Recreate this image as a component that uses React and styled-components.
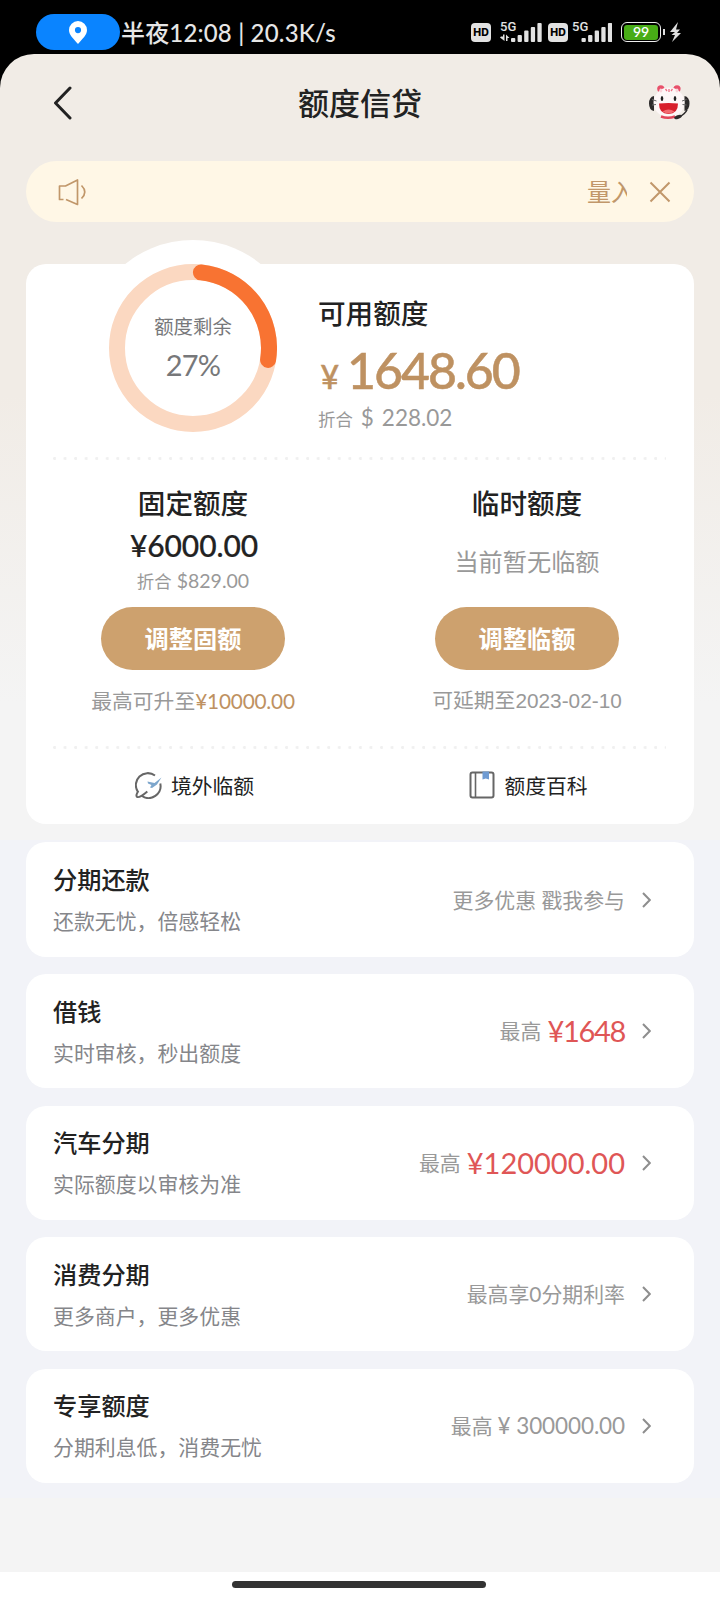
import styled, { createGlobalStyle } from 'styled-components';

const GlobalStyle = createGlobalStyle`
  * {
    box-sizing: border-box;
  }
  body {
    margin: 0;
    background: #000;
    font-family: Lato, 'Noto Sans CJK SC', sans-serif;
    color: #222;
  }
`;

const Screen = styled.div`
  width: 720px;
  height: 1600px;
  display: flex;
  flex-direction: column;
  overflow: hidden;
  background: #000;
`;

/* status bar */

const StatusBar = styled.div`
  height: 54px;
  flex: none;
  display: flex;
  align-items: center;
  padding: 10px 39px 0 36px;
  color: #e6e6e6;
`;

const LocationPill = styled.div`
  width: 84px;
  height: 36px;
  border-radius: 18px;
  background: #0a84ff;
  display: flex;
  align-items: center;
  justify-content: center;
`;

const StatusText = styled.div`
  margin-left: 1px;
  padding-top: 2px;
  font-size: 24px;
  line-height: 36px;
  font-weight: 500;
  letter-spacing: 0.17px;
  white-space: pre;
`;

const StatusIcons = styled.div`
  margin-left: auto;
  display: flex;
  align-items: center;
`;

const HdBadge = styled.div`
  width: 20px;
  height: 19px;
  margin-right: ${(props) => props.$gap}px;
  border-radius: 4px;
  background: #e2e2e2;
  color: #000;
  font-family: Inter, sans-serif;
  font-size: 10.5px;
  font-weight: 800;
  line-height: 19px;
  text-align: center;
`;

const Battery = styled.div`
  width: 40px;
  height: 20px;
  margin-left: 9px;
  border: 1.5px solid #eee;
  border-radius: 6px;
  padding: 1.5px 2px;
`;

const BatteryLevel = styled.div`
  height: 100%;
  border-radius: 3px;
  background: #48ac16;
  color: #fff;
  font-size: 14px;
  font-weight: 600;
  line-height: 14px;
  text-align: center;
`;

const BatteryCap = styled.div`
  width: 2px;
  height: 6px;
  margin: 0 5px 0 2px;
  background: #ddd;
`;

/* page */

const Sheet = styled.div`
  flex: 1;
  display: flex;
  flex-direction: column;
  border-radius: 34px 34px 0 0;
  overflow: hidden;
  background: linear-gradient(#f1ece6 0, #f1ece6 340px, #f4f4f4 650px);
`;

const Header = styled.div`
  height: 107px;
  flex: none;
  display: grid;
  grid-template-columns: 60px 1fr 60px;
  align-items: center;
  padding: 0 30px 9px 32px;
`;

const IconButton = styled.button`
  display: flex;
  padding: 0;
  border: none;
  background: none;
  justify-content: ${(props) => props.$align || 'center'};
`;

const PageTitle = styled.h1`
  margin: 0;
  padding: 0 2px 1px 0;
  font-size: 31px;
  font-weight: 500;
  line-height: 42px;
  text-align: center;
`;

const Notice = styled.div`
  height: 61px;
  flex: none;
  margin: 0 26px;
  padding: 0 23px 0 31px;
  border-radius: 31px;
  background: #fff7e6;
  color: #c1976a;
  display: flex;
  align-items: center;
`;

const NoticeText = styled.div`
  width: 40px;
  margin: 0 22px 0 auto;
  overflow: hidden;
  white-space: nowrap;
  font-size: 24px;
  line-height: 36px;
`;

const QuotaCard = styled.div`
  height: 560px;
  flex: none;
  margin: 42px 26px 0;
  border-radius: 20px;
  background: #fff;
`;

const QuotaTop = styled.div`
  height: 193px;
  display: flex;
`;

const Ring = styled.div`
  width: 216px;
  height: 216px;
  margin: -24px 0 0 59px;
  border-radius: 50%;
  background: #fff;
  display: grid;
  place-items: center;

  > * {
    grid-area: 1 / 1;
  }
`;

const RingLabel = styled.div`
  padding-top: 4px;
  text-align: center;
  color: #77787a;
`;

const RingCaption = styled.div`
  font-size: 19.4px;
  line-height: 30px;
`;

const RingPercent = styled.div`
  font-size: 29px;
  line-height: 46px;
  letter-spacing: -0.8px;
`;

const Available = styled.div`
  padding: 30px 0 0 17px;
`;

const QuotaName = styled.div`
  font-size: 27.6px;
  font-weight: 500;
  line-height: 40px;
`;

const AvailableAmount = styled.div`
  display: flex;
  align-items: baseline;
  height: 56px;
  margin-top: 8px;
  color: #be9161;
  font-size: 50px;
  font-weight: 500;
  line-height: 56px;
  letter-spacing: -2px;
  -webkit-text-stroke: 0.5px #be9161;
`;

const Currency = styled.span`
  margin: 0 8px 0 2.5px;
  font-size: 32px;
  letter-spacing: 0;
`;

const Converted = styled.div`
  height: 28px;
  margin-top: ${(props) => props.$top || 0}px;
  font-size: ${(props) => props.$size}px;
  line-height: 28px;
  color: #999;
  white-space: pre;
`;

const Dollar = styled.span`
  margin: 0 8px;
`;

const Small = styled.span`
  font-size: 17.4px;
`;

const DottedLine = styled.div`
  height: 3px;
  margin: 0 28px 0 27px;
  background: radial-gradient(circle at 1.5px 1.5px, #f0f0f0 1.3px, transparent 1.6px) 0 0 / 10.55px 3px;
`;

const Columns = styled.div`
  display: grid;
  grid-template-columns: 1fr 1fr;
`;

const QuotaColumn = styled.div`
  height: 286px;
  padding-top: 24px;
  display: flex;
  flex-direction: column;
  align-items: center;
`;

const FixedAmount = styled.div`
  height: 43px;
  padding-left: 2px;
  font-size: 30px;
  font-weight: 500;
  line-height: 42px;
  letter-spacing: -0.1px;
  -webkit-text-stroke: 0.2px #222;
`;

const EmptyText = styled.div`
  height: 71px;
  padding-top: 18px;
  font-size: 24.2px;
  line-height: 40px;
  color: #999;
`;

const AdjustButton = styled.button`
  width: 184px;
  height: 63px;
  flex: none;
  margin-top: 12px;
  padding: 0;
  border: none;
  border-radius: 32px;
  background: #cda16e;
  color: #fff;
  font: 700 24.2px/63px Lato, 'Noto Sans CJK SC', sans-serif;
`;

const Hint = styled.div`
  margin-top: 15px;
  font-size: 20.8px;
  line-height: 32px;
  color: #999;
  ${(props) => props.$arial && "font-family: 'Liberation Sans', 'Noto Sans CJK SC', sans-serif;"}
`;

const Gold = styled.span`
  color: #be9161;
  letter-spacing: -0.2px;
`;

const QuickLink = styled.div`
  height: 72px;
  padding-left: 3px;
  display: flex;
  align-items: center;
  justify-content: center;
  gap: 9px;
  font-size: 20.8px;
`;

const List = styled.div`
  flex: none;
  height: 658px;
  margin-top: 16px;
  padding: 2.4px 26px 0;
  display: flex;
  flex-direction: column;
  gap: 17.3px;
  background: #f2f3f8;
`;

const ListItem = styled.div`
  height: 114.3px;
  flex: none;
  display: flex;
  align-items: center;
  justify-content: space-between;
  padding: 0 43px 0 27px;
  border-radius: 20px;
  background: #fff;
`;

const ItemTitle = styled.div`
  padding-top: 2px;
  font-size: 24.2px;
  font-weight: 500;
  line-height: 40px;
`;

const ItemSub = styled.div`
  font-size: 20.9px;
  line-height: 41px;
  color: #85868a;
`;

const ItemRight = styled.div`
  display: flex;
  align-items: center;
  font-size: 20.9px;
  line-height: 40px;
  color: #999;
  white-space: pre;

  svg {
    margin-left: 17px;
  }
`;

const RedAmount = styled.span`
  margin-left: 6px;
  color: #df5656;
  font-size: 29px;
  letter-spacing: ${(props) => props.$spacing || 0}px;
`;

const GreyAmount = styled.span`
  font-size: 22.5px;
  margin-left: 5px;
  letter-spacing: -0.1px;
`;

const HomeArea = styled.div`
  height: 28px;
  flex: none;
  margin-top: auto;
  padding: 9px 3px 0 0;
  background: #fff;
`;

const HomeBar = styled.div`
  width: 254px;
  height: 7px;
  margin: 0 auto;
  border-radius: 4px;
  background: #333;
`;

const SignalIcon = ({ left, data, width }) => (
  <svg width={width} height="24" viewBox={`0 0 ${width} 24`} fill="#e2e2e2">
    <text x="0" y="11" fontSize="13" fontFamily="Roboto" fontWeight="500">
      5G
    </text>
    {data && <path d="M1 16.500h2v-2h1.500v6.500L0 17.500zM6 21v-6.500l3.500 3.500H7.500V21z" />}
    {[4, 7, 11.5, 15, 19].map((h, i) => (
      <rect key={h} x={left + i * 6.6} y={22 - h} width="4.300" height={h} rx="1" />
    ))}
  </svg>
);

const ChevronIcon = () => (
  <svg width="9" height="16" viewBox="0 0 9 16" fill="none" stroke="#8e8e8e" strokeWidth="2">
    <path d="M1 1l6.800 7L1 15" />
  </svg>
);

const MascotIcon = () => (
  <svg width="41" height="36" viewBox="0 0 41 36">
    <circle cx="11.800" cy="3.800" r="3.600" fill="#e8506a" />
    <circle cx="28" cy="3.800" r="3.600" fill="#e8506a" />
    <path d="M5 11q-5 1-5 7.500T5 26zM35.500 11q5 1 5 7.500t-5 7.500z" fill="#2d2b2b" />
    <ellipse cx="20" cy="17.500" rx="15.500" ry="15" fill="#fdf7f7" />
    <ellipse cx="11.800" cy="5.500" rx="1.500" ry="2" fill="#fbd5db" />
    <ellipse cx="28" cy="5.500" rx="1.500" ry="2" fill="#fbd5db" />
    <path d="M16.500 4l1.500 2M20 4v3M23.500 4L22 6" stroke="#ef7186" strokeWidth="1.300" />
    <path d="M12 31.500q7 2.500 14 0" fill="none" stroke="#e2475b" strokeWidth="2.500" />
    <path d="M3 14.500l4.500 1.500M3 20l4-.5M37.500 14.500L33 16M37.500 20l-4-.5" stroke="#666" />
    <path d="M38 25q-2 4-8 7" fill="none" stroke="#2d2b2b" strokeWidth="1.500" />
    <ellipse cx="29" cy="32" rx="4" ry="1.800" fill="#2d2b2b" transform="rotate(-20 29 32)" />
    <ellipse cx="13" cy="13.500" rx="1.300" ry="2.600" fill="#222" />
    <ellipse cx="26" cy="13.500" rx="1.300" ry="2.600" fill="#222" />
    <path d="M10 18.500q9.500-1 19 0 0 10.500-9.500 10.500T10 18.500z" fill="#d81f2c" />
    <path d="M13.500 26.500q6-4 12 0-6 4-12 0z" fill="#f26a70" />
  </svg>
);

const GlobeIcon = () => (
  <svg width="27" height="27" viewBox="0 0 27 27" fill="none" stroke="#666" strokeWidth="2">
    <path d="M20 3.500A12 12 0 0 0 3 20M25.300 11.500A12 12 0 0 1 7 24" />
    <path d="M3.300 19Q.2 24 2.300 25q2.500 1 10-5.500" />
    <path d="M12.500 9.500l7 1.500 7-5.500-4.500 7-5 3.500-2-.5 1.500-2.500-3.500-1.500z" fill="#7da6cc" stroke="none" />
  </svg>
);

const BookIcon = () => (
  <svg width="26" height="28" viewBox="0 0 26 28" fill="none" stroke="#666" strokeWidth="2">
    <rect x="1.500" y="1.500" width="23" height="25" rx="2" />
    <path d="M6.500 2v24" strokeWidth="1.600" />
    <path d="M13.500 0.500h6.500v8l-3.250-1-3.250 1z" fill="#6f9bd2" stroke="none" />
  </svg>
);

const polar = (deg) => {
  const rad = (deg * Math.PI) / 180;
  return `${84 + 76 * Math.sin(rad)} ${84 - 76 * Math.cos(rad)}`;
};

const ProgressRing = ({ from, to }) => (
  <svg width="168" height="168" viewBox="0 0 168 168" fill="none" strokeWidth="16">
    <circle cx="84" cy="84" r="76" stroke="#fbd8c1" />
    <path d={`M${polar(from)}A76 76 0 0 1 ${polar(to)}`} stroke="#f87332" strokeLinecap="round" />
  </svg>
);

const items = [
  { title: '分期还款', sub: '还款无忧，倍感轻松', right: '更多优惠 戳我参与' },
  { title: '借钱', sub: '实时审核，秒出额度', right: '最高', red: '¥1648', spacing: -1.3 },
  { title: '汽车分期', sub: '实际额度以审核为准', right: '最高', red: '¥120000.00' },
  { title: '消费分期', sub: '更多商户，更多优惠', right: '最高享0分期利率' },
  { title: '专享额度', sub: '分期利息低，消费无忧', right: '最高', grey: '¥ 300000.00' },
];

function App() {
  return (
    <Screen>
      <GlobalStyle />
      <StatusBar>
        <LocationPill>
          <svg width="18" height="23" viewBox="0 0 18 23">
            <path
              d="M9 0a9 9 0 0 1 9 9c0 5-4 8-9 14C4 17 0 14 0 9a9 9 0 0 1 9-9zm0 6a3 3 0 1 0 0 6.200A3 3 0 0 0 9 6z"
              fill="#fff"
            />
          </svg>
        </LocationPill>
        <StatusText>半夜12:08 | 20.3K/s</StatusText>
        <StatusIcons>
          <HdBadge $gap={9}>HD</HdBadge>
          <SignalIcon width={48} left={11} data />
          <HdBadge $gap={4}>HD</HdBadge>
          <SignalIcon width={40} left={9.5} />
          <Battery>
            <BatteryLevel>99</BatteryLevel>
          </Battery>
          <BatteryCap />
          <svg width="11" height="20" viewBox="0 0 11 20" fill="#ddd">
            <path d="M8 0L0 10h5L1.500 13H5l-3 7 9-9H7l3-3.500H6z" />
          </svg>
        </StatusIcons>
      </StatusBar>
      <Sheet>
        <Header>
          <IconButton aria-label="返回" $align="flex-start">
            <svg width="60" height="34" viewBox="0 0 60 34" fill="none" stroke="#222" strokeWidth="3">
              <path d="M38 2L23.500 17l14.500 15" strokeLinecap="round" strokeLinejoin="round" />
            </svg>
          </IconButton>
          <PageTitle>额度信贷</PageTitle>
          <IconButton aria-label="客服" $align="flex-end">
            <MascotIcon />
          </IconButton>
        </Header>
        <Notice>
          <svg width="29" height="28" viewBox="0 0 29 28" fill="none" stroke="currentColor" strokeWidth="1.700">
            <path d="M6.500 21.500H2.500V8h6L20.500 2v24.500L9 21.500" strokeLinejoin="round" />
            <path d="M24.500 7.500q6.500 6.500 0 13" />
          </svg>
          <NoticeText>量入</NoticeText>
          <svg width="22" height="22" viewBox="0 0 22 22" stroke="currentColor" strokeWidth="2">
            <path d="M1.500 1.500l19 19M20.500 1.500l-19 19" />
          </svg>
        </Notice>
        <QuotaCard>
          <QuotaTop>
            <Ring>
              <ProgressRing from={6} to={99} />
              <RingLabel>
                <RingCaption>额度剩余</RingCaption>
                <RingPercent>27%</RingPercent>
              </RingLabel>
            </Ring>
            <Available>
              <QuotaName>可用额度</QuotaName>
              <AvailableAmount>
                <Currency>¥</Currency>1648.60
              </AvailableAmount>
              <Converted $top={6} $size={22.5}>
                <Small>折合</Small>
                <Dollar>$</Dollar>
                228.02
              </Converted>
            </Available>
          </QuotaTop>
          <DottedLine />
          <Columns>
            <QuotaColumn>
              <QuotaName>固定额度</QuotaName>
              <FixedAmount>¥6000.00</FixedAmount>
              <Converted $size={19.5}>
                <Small>折合</Small> $829.00
              </Converted>
              <AdjustButton>调整固额</AdjustButton>
              <Hint>
                最高可升至<Gold>¥10000.00</Gold>
              </Hint>
            </QuotaColumn>
            <QuotaColumn>
              <QuotaName>临时额度</QuotaName>
              <EmptyText>当前暂无临额</EmptyText>
              <AdjustButton>调整临额</AdjustButton>
              <Hint $arial>可延期至2023-02-10</Hint>
            </QuotaColumn>
          </Columns>
          <DottedLine />
          <Columns>
            <QuickLink>
              <GlobeIcon />
              境外临额
            </QuickLink>
            <QuickLink>
              <BookIcon />
              额度百科
            </QuickLink>
          </Columns>
        </QuotaCard>
        <List>
          {items.map((item) => (
            <ListItem key={item.title}>
              <div>
                <ItemTitle>{item.title}</ItemTitle>
                <ItemSub>{item.sub}</ItemSub>
              </div>
              <ItemRight>
                {item.right}
                {item.red && <RedAmount $spacing={item.spacing}>{item.red}</RedAmount>}
                {item.grey && <GreyAmount>{item.grey}</GreyAmount>}
                <ChevronIcon />
              </ItemRight>
            </ListItem>
          ))}
        </List>
        <HomeArea>
          <HomeBar />
        </HomeArea>
      </Sheet>
    </Screen>
  );
}

export default App;
